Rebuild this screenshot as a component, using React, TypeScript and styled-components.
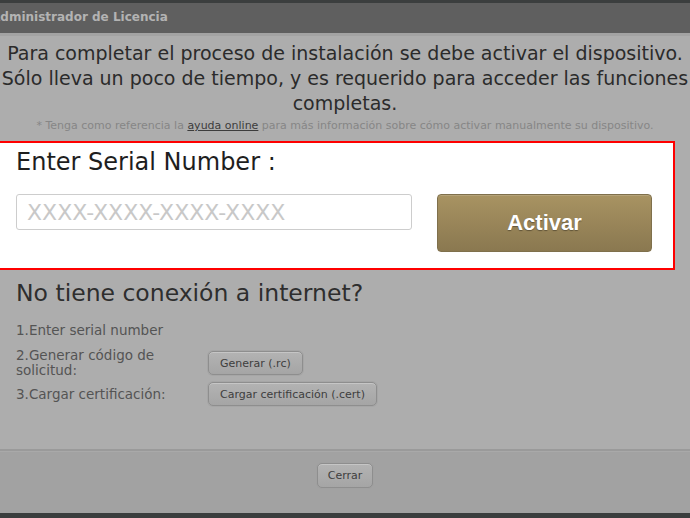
import React from "react";
import styled, { createGlobalStyle } from "styled-components";

const Global = createGlobalStyle`
  html, body { margin: 0; padding: 0; }
  body {
    width: 690px;
    height: 518px;
    overflow: hidden;
    background: #3b3e3e;
    font-family: "DejaVu Sans", Verdana, sans-serif;
  }
`;

const Page = styled.div`
  width: 690px;
  height: 518px;
  padding-top: 3px;
  box-sizing: border-box;
  display: flex;
  flex-direction: column;
`;

const Dialog = styled.div`
  display: flex;
  flex-direction: column;
  height: 510px;
  overflow: hidden;
`;

const TitleBar = styled.div`
  height: 28px;
  flex: none;
  background: #5f5f5f;
  border-bottom: 3px solid #a3a3a3;
  display: flex;
  align-items: center;
  margin-left: -9px;
  font-weight: bold;
  font-size: 12px;
  color: #b3b3b3;
  padding-bottom: 2px;
  box-sizing: content-box;
  white-space: nowrap;
`;

const Body = styled.div`
  flex: 1;
  background: #adadad;
  padding-top: 5px;
  display: flex;
  flex-direction: column;
`;

const Intro = styled.div`
  display: flex;
  flex-direction: column;
  align-items: center;
  font-size: 19px;
  line-height: 25px;
  color: #2b2b2b;
`;

const Line = styled.div`
  white-space: nowrap;
`;

const Note = styled.div`
  text-align: center;
  font-size: 11px;
  line-height: 14px;
  color: #868686;
  margin-top: 3px;
  white-space: nowrap;
  a {
    color: #3c3c3c;
    text-decoration: underline;
  }
`;

const Highlight = styled.section`
  margin: 8px 0 0 -2px;
  width: 677px;
  box-sizing: border-box;
  height: 129px;
  background: #ffffff;
  border: 2px solid #ff0000;
  padding: 5px 0 0 16px;
  display: flex;
  flex-direction: column;
`;

const SerialLabel = styled.div`
  font-size: 24px;
  line-height: 28px;
  color: #1e1e1e;
`;

const SerialRow = styled.div`
  display: flex;
  align-items: flex-start;
  margin-top: 18px;
`;

const SerialInput = styled.input`
  width: 396px;
  height: 36px;
  box-sizing: border-box;
  border: 1px solid #cdcdcd;
  border-radius: 3px;
  padding: 0 10px;
  font-family: "DejaVu Sans", Verdana, sans-serif;
  font-size: 22px;
  color: #333;
  outline: none;
  &::placeholder { color: #c8c8c8; }
`;

const ActivateButton = styled.button`
  margin-left: 25px;
  width: 215px;
  height: 58px;
  border: 1px solid #7f704c;
  border-radius: 4px;
  background: linear-gradient(#a89362, #8a7850);
  color: #ffffff;
  font-family: "Liberation Sans", Arial, sans-serif;
  font-weight: bold;
  font-size: 22px;
  text-shadow: 0 1px 1px rgba(0,0,0,0.35);
  box-shadow: inset 0 1px 0 rgba(255,255,255,0.15);
  cursor: pointer;
`;

const Offline = styled.div`
  padding: 9px 0 0 16px;
  display: flex;
  flex-direction: column;
`;

const OfflineTitle = styled.div`
  font-size: 23.5px;
  line-height: 28px;
  color: #2e2e2e;
`;

const StepGrid = styled.div`
  display: grid;
  grid-template-columns: 192px auto;
  align-items: center;
  row-gap: 4px;
  margin-top: 16px;
  justify-items: start;
`;

const StepText = styled.div<{ $span?: boolean }>`
  font-size: 13.5px;
  line-height: 15px;
  color: #545454;
  grid-column: ${(p) => (p.$span ? "1 / span 2" : "auto")};
  margin-bottom: ${(p) => (p.$span ? "6px" : "0")};
`;

const SmallButton = styled.button`
  height: 24px;
  padding: 0 11px;
  border: 1px solid #8e8e8e;
  border-radius: 5px;
  background: linear-gradient(#b3b3b3, #a5a5a5);
  box-shadow: inset 0 1px 0 rgba(255,255,255,0.25), 0 0 0 1px rgba(160,160,160,0.5);
  font-family: "DejaVu Sans", Verdana, sans-serif;
  font-size: 11px;
  color: #3e3e3e;
  cursor: pointer;
`;

const Footer = styled.div`
  flex: none;
  height: 64px;
  background: #a2a2a2;
  border-top: 2px solid #9a9a9a;
  box-shadow: inset 0 1px 0 #a9a9a9;
  display: flex;
  justify-content: center;
  padding-top: 12px;
  box-sizing: border-box;
`;

const CloseButton = styled(SmallButton)`
  height: 25px;
  padding: 0 10px;
`;

export default function App() {
  return (
    <>
      <Global />
      <Page>
        <Dialog>
          <TitleBar>Administrador de Licencia</TitleBar>
          <Body>
            <Intro>
              <Line>Para completar el proceso de instalación se debe activar el dispositivo.</Line>
              <Line>Sólo lleva un poco de tiempo, y es requerido para acceder las funciones</Line>
              <Line>completas.</Line>
            </Intro>
            <Note>
              * Tenga como referencia la <a>ayuda online</a> para más información sobre cómo activar manualmente su dispositivo.
            </Note>
            <Highlight>
              <SerialLabel>Enter Serial Number :</SerialLabel>
              <SerialRow>
                <SerialInput placeholder="XXXX-XXXX-XXXX-XXXX" />
                <ActivateButton>Activar</ActivateButton>
              </SerialRow>
            </Highlight>
            <Offline>
              <OfflineTitle>No tiene conexión a internet?</OfflineTitle>
              <StepGrid>
                <StepText $span>1.Enter serial number</StepText>
                <StepText>2.Generar código de<br />solicitud:</StepText>
                <SmallButton>Generar (.rc)</SmallButton>
                <StepText>3.Cargar certificación:</StepText>
                <SmallButton>Cargar certificación (.cert)</SmallButton>
              </StepGrid>
            </Offline>
          </Body>
          <Footer>
            <CloseButton>Cerrar</CloseButton>
          </Footer>
        </Dialog>
      </Page>
    </>
  );
}
